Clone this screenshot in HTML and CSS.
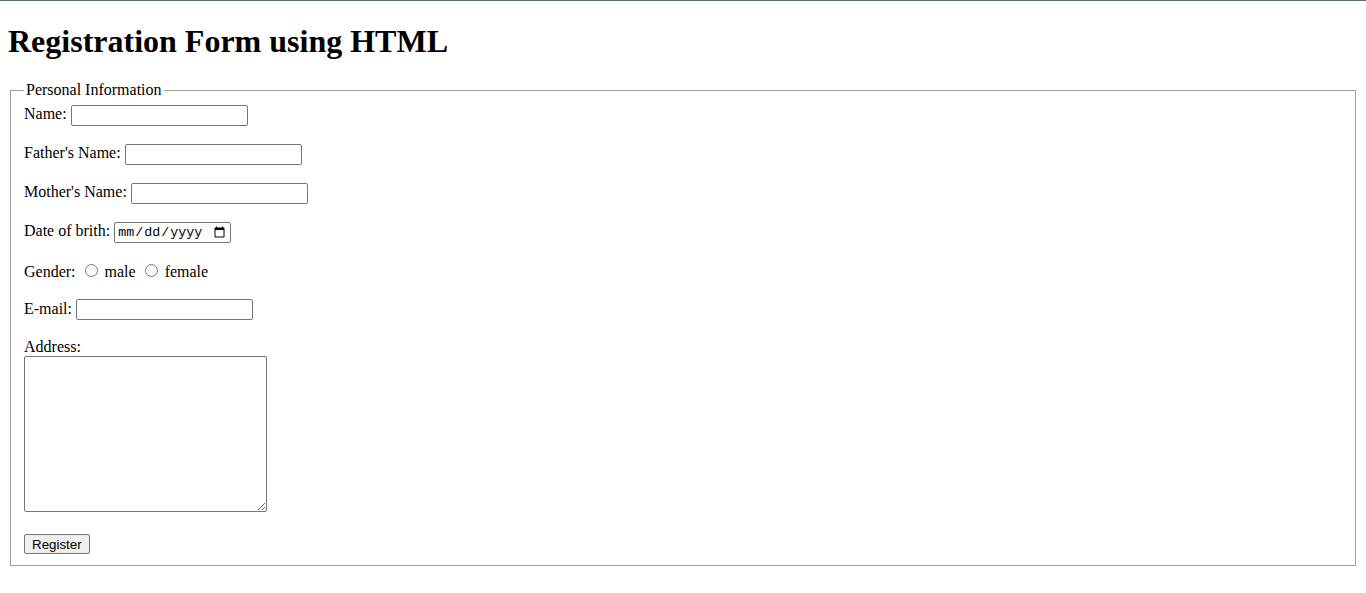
FILE: index.html
```html
<!DOCTYPE html>
<html>
<head>
<meta charset="utf-8">
<title>Registration Form</title>
<link rel="stylesheet" href="styles.css">
</head>
<body>
<h1 class="title">Registration Form using HTML</h1>
<form class="form">
<fieldset class="box">
<legend class="legend">Personal Information</legend>
Name: <input type="text" class="field"><br><br>
Father's Name: <input type="text" class="field"><br><br>
Mother's Name: <input type="text" class="field"><br><br>
Date of brith: <input type="date" class="date"><br><br>
Gender: <input type="radio" name="g" class="radio"> male <input type="radio" name="g" class="radio"> female<br><br>
E-mail: <input type="email" class="field email"><br><br>
Address:<br>
<textarea class="area"></textarea><br><br>
<button type="button" class="btn">Register</button>
</fieldset>
</form>
</body>
</html>
```
FILE: styles.css
```css
html { background: #fff; }
body {
  margin: 8px;
  font-family: "Liberation Serif", "Times New Roman", serif;
  font-size: 16px;
  color: #000;
}
body::before {
  content: "";
  position: fixed;
  left: 0; top: 0; right: 0;
  height: 1px;
  background: #5f6b73;
}
.title {
  font-size: 32px;
  font-weight: bold;
  margin: 15px 0 21px;
}
.form { margin: 0; }
.box {
  margin: 0 2px;
  padding: 6px 13px 11px 13px;
  border: 1px solid #a0a0a0;
}
.legend { padding: 0 2px; }
.field {
  box-sizing: border-box;
  width: 177px;
  height: 21px;
  border: 1px solid #767676;
  border-radius: 2px;
  font-family: "Liberation Sans", Arial, sans-serif;
  font-size: 13.33px;
  padding: 1px 2px;
  margin: 0;
  vertical-align: -1px;
}
.email { vertical-align: 0; height: 21px; }
.date {
  box-sizing: border-box;
  width: 117px;
  height: 21px;
  border: 1px solid #767676;
  border-radius: 2px;
  font-family: "Liberation Mono", monospace;
  font-size: 13.33px;
  padding: 1px 2px;
  margin: 0;
}
.radio { margin: 3px 3px 0 5px; }
.area {
  box-sizing: border-box;
  width: 243px;
  height: 156px;
  border: 1px solid #767676;
  border-radius: 2px;
  margin: 0;
  font-family: "Liberation Mono", monospace;
  font-size: 13.33px;
}
.btn {
  font-family: "Liberation Sans", Arial, sans-serif;
  font-size: 13.33px;
  box-sizing: border-box;
  height: 20px;
  padding: 1px 7px;
  border: 1px solid #767676;
  border-radius: 2px;
  background: #efefef;
  color: #000;
  margin: 0;
}
```
